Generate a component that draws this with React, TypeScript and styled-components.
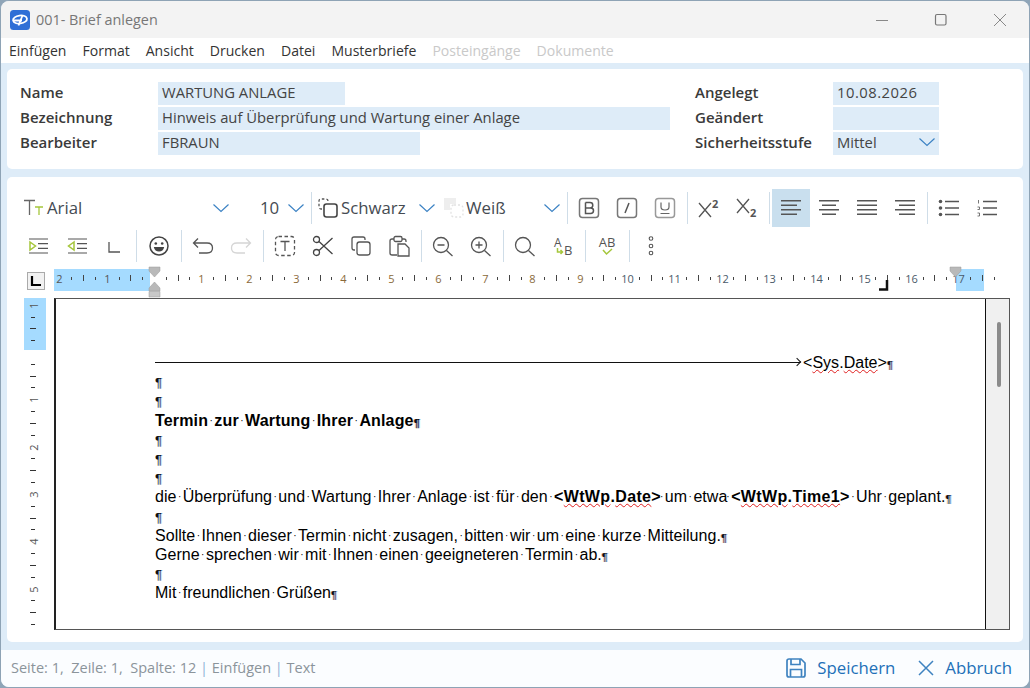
import React from "react";
import styled, { createGlobalStyle } from "styled-components";

const GlobalStyle = createGlobalStyle`
  html, body { margin: 0; padding: 0; background: #8fa5b8; }
  body { width: 1030px; height: 688px; overflow: hidden; font-family: "Open Sans", "Noto Sans", sans-serif; }
`;

const Window = styled.div`
  width: 1030px;
  height: 688px;
  box-sizing: border-box;
  border: 1px solid #8ea3b5;
  border-radius: 9px;
  overflow: hidden;
  background: #deecf8;
  display: flex;
  flex-direction: column;
`;

const TitleBar = styled.div`
  height: 37px;
  flex: none;
  background: #f3f3f3;
  display: flex;
  align-items: center;
  padding-left: 9px;
  color: #777;
  font-size: 14.4px;
`;

const TitleText = styled.span`
  margin-left: 6px;
  flex: 1;
`;

const WinButton = styled.div`
  width: 59px;
  height: 37px;
  display: flex;
  align-items: center;
  justify-content: center;
`;

const MenuBar = styled.div`
  height: 25px;
  flex: none;
  background: #fff;
  display: flex;
  align-items: center;
  gap: 16px;
  padding-left: 8px;
  font-size: 14.05px;
  color: #333;
`;

const MenuItem = styled.span<{ $off?: boolean }>`
  color: ${(p) => (p.$off ? "#c9c9c9" : "#333")};
`;

const Card = styled.div`
  background: #fff;
  border-radius: 5px;
  margin: 0 6px;
`;

const HeaderCard = styled(Card)`
  height: 100px;
  margin-top: 6px;
  box-sizing: border-box;
  padding: 13px 13px;
  display: grid;
  grid-template-columns: 138px 537px 138px 1fr;
  grid-auto-rows: 23px;
  row-gap: 2px;
  align-items: center;
`;

const Label = styled.div`
  font-size: 15px;
  font-weight: 600;
  color: #3a3a3a;
  padding-bottom: 4px;
`;

const Field = styled.div<{ $w: number; $tracking?: number }>`
  width: ${(p) => p.$w}px;
  height: 23px;
  background: #deecf8;
  font-size: 14.8px;
  letter-spacing: ${(p) => p.$tracking ?? 0}px;
  color: #444;
  padding: 0 3px 3px 4px;
  box-sizing: border-box;
  display: flex;
  align-items: center;
  justify-content: space-between;
`;

const EditorCard = styled(Card)`
  height: 465px;
  margin-top: 8px;
  box-sizing: border-box;
  padding: 12px 0 0 12px;
  display: flex;
  flex-direction: column;
`;

const ToolRow = styled.div`
  display: flex;
  height: 38px;
  align-items: center;
  flex: none;
`;

const ToolBtn = styled.div<{ $on?: boolean }>`
  width: 38px;
  height: 38px;
  flex: none;
  display: flex;
  align-items: center;
  justify-content: center;
  background: ${(p) => (p.$on ? "#c9dfee" : "transparent")};
`;

const Sep = styled.div<{ $w?: number }>`
  width: ${(p) => p.$w ?? 6}px;
  height: 32px;
  flex: none;
  display: flex;
  justify-content: center;
  &::before {
    content: "";
    width: 1px;
    background: #cfdde8;
  }
`;

const Combo = styled.div<{ $w: number; $pl: number; $pr: number }>`
  width: ${(p) => p.$w}px;
  height: 38px;
  flex: none;
  display: flex;
  align-items: center;
  font-size: 16.8px;
  color: #454b52;
  box-sizing: border-box;
  padding: 0 ${(p) => p.$pr}px 0 ${(p) => p.$pl}px;
`;

const ComboText = styled.span<{ $ml?: number }>`
  flex: 1;
  margin-left: ${(p) => p.$ml ?? 1}px;
  padding-bottom: 2px;
`;

const RulerRow = styled.div`
  height: 33px;
  flex: none;
  display: flex;
  align-items: flex-start;
  margin-left: 8px;
`;

const TabBox = styled.div`
  width: 18px;
  height: 18px;
  flex: none;
  box-sizing: border-box;
  border: 1px solid #aaa;
  background: #f2f2f2;
  margin: 7px 9px 0 0;
  display: flex;
  align-items: center;
  justify-content: center;
`;

const WorkArea = styled.div`
  display: flex;
  flex: none;
  height: 332px;
  margin-left: 5px;
`;

const SideRuler = styled.div`
  width: 30px;
  flex: none;
`;

const DocFrame = styled.div`
  width: 956px;
  height: 332px;
  box-sizing: border-box;
  border: 1px solid #555;
  border-left: 2px solid #222;
  display: flex;
`;

const Page = styled.div`
  flex: 1;
  border-right: 1px solid #111;
  padding: 54px 0 0 99px;
  font-family: "Liberation Sans", Arial, sans-serif;
  font-size: 16px;
  letter-spacing: 0.03px;
  color: #000;
  overflow: hidden;
`;

const Scrollbar = styled.div`
  width: 23px;
  flex: none;
  background: #f0f0f0;
  position: relative;
`;

const Thumb = styled.div`
  position: absolute;
  left: 11px;
  top: 23px;
  width: 4px;
  height: 65px;
  border-radius: 2px;
  background: #8b8b8b;
`;

/* $step is the distance to the next line: the document's lines are not evenly spaced */
const DocLine = styled.div<{ $step: number; $bold?: boolean }>`
  height: ${(p) => p.$step}px;
  line-height: 20px;
  white-space: nowrap;
  font-weight: ${(p) => (p.$bold ? 700 : 400)};
  letter-spacing: ${(p) => (p.$bold ? "0.15px" : "inherit")};
  display: flex;
  align-items: flex-start;
`;

const Strong = styled.span`
  font-weight: 700;
  letter-spacing: 0.35px;
`;

const Pilcrow = styled.span`
  font-size: 13px;
  color: #111;
  margin-top: -1px;
  text-shadow: 1px 0 0 rgba(70, 140, 225, 0.4);
`;

const EndMark = styled(Pilcrow)`
  font-size: 11px;
  margin-top: 0;
  padding-top: 2px;
  text-shadow: 1px 0 0 rgba(70, 140, 225, 0.5), -1px 0 0 rgba(200, 90, 30, 0.35);
`;

const Dot = styled.span`
  display: inline-block;
  width: 6.3px;
  text-align: center;
  font-size: 10px;
  font-weight: 400;
  letter-spacing: 0;
`;

const TightDot = styled(Dot)`
  margin-left: -2.5px;
`;

const Squiggle = styled.span`
  text-decoration: underline wavy #e02020;
  text-decoration-thickness: 1px;
  text-underline-offset: 1px;
`;

const TabArrow = styled.div`
  width: 645px;
  height: 1px;
  background: #111;
  position: relative;
  flex: none;
  margin: 9px 3px 0 0;
  &::after {
    content: "";
    position: absolute;
    right: 0;
    top: -3px;
    width: 6px;
    height: 6px;
    box-sizing: border-box;
    border-top: 1px solid #111;
    border-right: 1px solid #111;
    transform: rotate(45deg);
  }
`;

const StatusBar = styled.div`
  flex: 1;
  margin-top: 8px;
  background: #fbfdff;
  display: flex;
  align-items: center;
  padding: 0 17px 2px 10px;
  font-size: 14.5px;
  color: #8b949b;
`;

const StatusText = styled.span`
  flex: 1;
  white-space: pre;
`;

const Bar = styled.span`
  color: #8fb4d6;
`;

const ActionBtn = styled.div`
  display: flex;
  align-items: center;
  gap: 11px;
  font-size: 16.8px;
  color: #2270b8;
  margin-left: 23px;
`;

const Svg = styled.svg.attrs({ fill: "none" })`
  display: block;
  flex: none;
  overflow: visible;
`;

const SvgLabel = styled.text`
  font-family: "Open Sans", sans-serif;
`;

const S = "#555";
const G = "#a5c63b";

const Icon = ({ children, w = 22, h = 22, c = S, sw = 1.3 }: { children: React.ReactNode; w?: number; h?: number; c?: string; sw?: number }) => (
  <Svg width={w} height={h} viewBox={`0 0 ${w} ${h}`} stroke={c} strokeWidth={sw}>
    {children}
  </Svg>
);

const Chevron = () => (
  <Icon w={18} h={10} c="#3d83c4" sw={1.2}>
    <path d="M1.5 1.5 L9 8.5 L16.5 1.5" />
  </Icon>
);

const Lines = ({ rows }: { rows: [number, number][] }) => (
  <Icon sw={1.4}>
    {rows.map(([a, b], i) => (
      <path key={i} d={`M${a} ${3.8 + i * 4.5} H${b}`} />
    ))}
  </Icon>
);

const Boxed = ({ children, c = "#777" }: { children: React.ReactNode; c?: string }) => (
  <Icon c={c} sw={1.5}>
    <rect x="1.5" y="1.5" width="19" height="19" rx="3" />
    {children}
  </Icon>
);

const Logo = () => (
  <Svg width="20" height="20" viewBox="0 0 20 20">
    <rect width="20" height="20" rx="3.5" fill="#2f6fd6" />
    <ellipse cx="10" cy="9.5" rx="7" ry="4" stroke="#fff" strokeWidth="1.8" transform="rotate(-8 10 9.5)" />
    <path d="M4 10.5 H12 M12.5 5.5 L8.5 15.5" stroke="#fff" strokeWidth="1.8" />
  </Svg>
);

const hTicks = () => {
  const items: React.ReactNode[] = [];
  const origin = 100;
  const cm = 47.3;
  for (let q = -8; q <= 71; q++) {
    const x = Math.round(origin + (q * cm) / 4) + 0.5;
    if (q % 4 === 0) {
      const n = Math.abs(q / 4);
      if (n === 0) continue;
      items.push(
        <SvgLabel key={q} x={x} y={18} fontSize="11" fill={q < 0 ? "#555" : n > 9 ? "#4a5a6a" : "#8a6a3a"} stroke="none" textAnchor="middle">
          {n}
        </SvgLabel>
      );
    } else {
      const half = q % 2 === 0;
      items.push(<path key={q} d={`M${x} ${half ? 10 : 12} V${half ? 16 : 15}`} stroke="#444" />);
    }
  }
  return items;
};

const Ruler = () => (
  <Svg width="958" height="33" viewBox="0 0 958 33">
    <rect x="0" y="4" width="96" height="22" fill="#a5dbff" />
    <rect x="902" y="4" width="28" height="22" fill="#a5dbff" />
    {hTicks()}
    <path d="M95 2 H106 V6 L100.5 12 L95 6 Z" fill="#b9b9b9" stroke="#999" strokeWidth="0.5" />
    <path d="M100.5 17 L106 23 V26 H95 V23 Z" fill="#b9b9b9" stroke="#999" strokeWidth="0.5" />
    <path d="M95 26.5 H106 V32 H95 Z" fill="#c8c8c8" stroke="#999" strokeWidth="0.5" />
    <path d="M896 2 H907 V6 L901.5 12 L896 6 Z" fill="#b9b9b9" stroke="#999" strokeWidth="0.5" />
    <path d="M833 15 V24.5 H825" stroke="#111" strokeWidth="2.5" />
  </Svg>
);

const vTicks = () => {
  const items: React.ReactNode[] = [];
  const zero = 54;
  const cm = 47.3;
  for (let q = -4; q <= 23; q++) {
    const y = Math.round(zero + (q * cm) / 4) + 0.5;
    if (q === 0) continue;
    if (q % 4 === 0) {
      const n = Math.abs(q / 4);
      items.push(
        <SvgLabel key={q} x={0} y={0} fontSize="11" fill="#555" stroke="none" textAnchor="middle" transform={`translate(14 ${y}) rotate(-90)`}>
          {n}
        </SvgLabel>
      );
    } else {
      const half = q % 2 === 0;
      items.push(<path key={q} d={`M${half ? 6 : 7} ${y} H${half ? 12 : 11}`} stroke="#333" />);
    }
  }
  return items;
};

const SideRulerArt = () => (
  <Svg width="22" height="331" viewBox="0 0 22 331">
    <rect x="0" y="0" width="22" height="52" fill="#a5dbff" />
    {vTicks()}
  </Svg>
);

const Spaced = ({ text }: { text: string }) => {
  const parts = text.split(" ");
  return (
    <>
      {parts.map((w, i) => (
        <React.Fragment key={i}>
          <span>{w}</span>
          {i < parts.length - 1 && <Dot>·</Dot>}
        </React.Fragment>
      ))}
    </>
  );
};

const Empty = ({ step }: { step: number }) => (
  <DocLine $step={step}>
    <Pilcrow>¶</Pilcrow>
  </DocLine>
);

export default function App() {
  return (
    <Window>
      <GlobalStyle />
      <TitleBar>
        <Logo />
        <TitleText>001- Brief anlegen</TitleText>
        <WinButton>
          <Icon w={14} h={14} c="#888" sw={1}>
            <path d="M1 7.5 H13" />
          </Icon>
        </WinButton>
        <WinButton>
          <Icon w={14} h={14} c="#777" sw={1.2}>
            <rect x="1.5" y="1.5" width="10.5" height="10.5" rx="1.5" />
          </Icon>
        </WinButton>
        <WinButton>
          <Icon w={14} h={14} c="#888" sw={1}>
            <path d="M1 1 L13 13 M13 1 L1 13" />
          </Icon>
        </WinButton>
      </TitleBar>
      <MenuBar>
        {["Einfügen", "Format", "Ansicht", "Drucken", "Datei", "Musterbriefe"].map((m) => (
          <MenuItem key={m}>{m}</MenuItem>
        ))}
        <MenuItem $off>Posteingänge</MenuItem>
        <MenuItem $off>Dokumente</MenuItem>
      </MenuBar>
      <HeaderCard>
        <Label>Name</Label>
        <Field $w={187}>WARTUNG ANLAGE</Field>
        <Label>Angelegt</Label>
        <Field $w={106} $tracking={0.5}>10.08.2026</Field>
        <Label>Bezeichnung</Label>
        <Field $w={512}>Hinweis auf Überprüfung und Wartung einer Anlage</Field>
        <Label>Geändert</Label>
        <Field $w={106} />
        <Label>Bearbeiter</Label>
        <Field $w={262}>FBRAUN</Field>
        <Label>Sicherheitsstufe</Label>
        <Field $w={106}>
          Mittel
          <Chevron />
        </Field>
      </HeaderCard>
      <EditorCard>
        <ToolRow>
          <Combo $w={213} $pl={5} $pr={2}>
            <Icon w={22} h={22}>
              <path d="M0 3.5 H11 M5.5 3.5 V18" stroke="#666" />
              <path d="M11 10 H19 M15 10 V18" stroke={G} />
            </Icon>
            <ComboText>Arial</ComboText>
            <Chevron />
          </Combo>
          <Combo $w={76} $pl={0} $pr={3}>
            <ComboText $ml={28}>10</ComboText>
            <Chevron />
          </Combo>
          <Sep />
          <Combo $w={124} $pl={3} $pr={2}>
            <Icon w={22} h={22}>
              <path d="M5 12 H4 Q2 12 2 10 V4 Q2 2 4 2 H9 Q11 2 11 4 V6" strokeDasharray="2.5 2" />
              <rect x="7" y="7" width="13" height="13" rx="2.5" stroke="#444" strokeWidth="1.6" />
            </Icon>
            <ComboText $ml={2}>Schwarz</ComboText>
            <Chevron />
          </Combo>
          <Combo $w={126} $pl={5} $pr={3}>
            <Icon w={22} h={22}>
              <path d="M1 1 H13 V7 H7 V13 H1 Z" fill="#eee" stroke="none" />
              <rect x="8" y="8" width="12" height="12" rx="3" stroke="#e2e2e2" strokeDasharray="2 2" />
            </Icon>
            <ComboText $ml={1}>Weiß</ComboText>
            <Chevron />
          </Combo>
          <Sep />
          <ToolBtn>
            <Boxed>
              <path d="M7.5 5.5 V16.5 H12.5 Q15.5 16.5 15.5 13.5 Q15.5 11 12.5 11 H7.5 M12 11 Q14.8 11 14.8 8.2 Q14.8 5.5 12 5.5 H7.5" stroke="#555" />
            </Boxed>
          </ToolBtn>
          <ToolBtn>
            <Boxed>
              <path d="M13 6 L9 16" stroke="#555" />
            </Boxed>
          </ToolBtn>
          <ToolBtn>
            <Boxed c="#999">
              <path d="M7 5.5 V10 Q7 13 11 13 Q15 13 15 10 V5.5 M6.5 16.5 H15.5" stroke="#666" strokeWidth="1.2" />
            </Boxed>
          </ToolBtn>
          <Sep />
          <ToolBtn>
            <Icon>
              <path d="M1 6 L13 20 M13 6 L1 20" />
              <SvgLabel x="14" y="11" fontSize="11" fontWeight="700" fill="#555" stroke="none">2</SvgLabel>
            </Icon>
          </ToolBtn>
          <ToolBtn>
            <Icon>
              <path d="M1 2 L13 16 M13 2 L1 16" />
              <SvgLabel x="14" y="20" fontSize="11" fontWeight="700" fill="#555" stroke="none">2</SvgLabel>
            </Icon>
          </ToolBtn>
          <Sep />
          <ToolBtn $on>
            <Lines rows={[[1, 21], [1, 17], [1, 21], [1, 17]]} />
          </ToolBtn>
          <ToolBtn>
            <Lines rows={[[1, 21], [4, 18], [1, 21], [4, 18]]} />
          </ToolBtn>
          <ToolBtn>
            <Lines rows={[[1, 21], [1, 21], [1, 21], [1, 21]]} />
          </ToolBtn>
          <ToolBtn>
            <Lines rows={[[1, 21], [5, 21], [1, 21], [5, 21]]} />
          </ToolBtn>
          <Sep />
          <ToolBtn>
            <Icon sw={1.4}>
              <path d="M7 4.5 H21 M7 11 H21 M7 17.5 H21" />
              <circle cx="2.5" cy="4.5" r="1.8" fill="#555" stroke="none" />
              <circle cx="2.5" cy="11" r="1.8" fill="#555" stroke="none" />
              <circle cx="2.5" cy="17.5" r="1.8" fill="#555" stroke="none" />
            </Icon>
          </ToolBtn>
          <ToolBtn>
            <Icon sw={1.4}>
              <path d="M7 4.5 H21 M7 11 H21 M7 17.5 H21" />
              <path d="M2.5 3 V6.5 M1.5 10 H3.5 V12.5 H1.5 M1.5 16 H3.5 V19 H1.5" strokeWidth="0.8" />
            </Icon>
          </ToolBtn>
        </ToolRow>
        <ToolRow>
          <ToolBtn>
            <Icon sw={1.2}>
              <path d="M3 7 L8.5 11 L3 15 Z" stroke={G} strokeWidth="1.5" />
              <path d="M2 4 H21 M11 8.7 H21 M11 13.3 H21 M2 18 H21" />
            </Icon>
          </ToolBtn>
          <ToolBtn>
            <Icon sw={1.2}>
              <path d="M9 7 L3.5 11 L9 15 Z" stroke={G} strokeWidth="1.5" />
              <path d="M3 4 H22 M12 8.7 H22 M12 13.3 H22 M3 18 H22" />
            </Icon>
          </ToolBtn>
          <ToolBtn>
            <Icon>
              <path d="M6 7 V17 H17" />
            </Icon>
          </ToolBtn>
          <Sep $w={7} />
          <ToolBtn>
            <Icon c="#444" sw={1.5}>
              <circle cx="11" cy="11" r="9" />
              <circle cx="7.8" cy="8.5" r="1.3" fill="#444" stroke="none" />
              <circle cx="14.2" cy="8.5" r="1.3" fill="#444" stroke="none" />
              <path d="M5.8 12 H16.2 Q15.2 16.5 11 16.5 Q6.8 16.5 5.8 12 Z" fill="#444" stroke="none" />
            </Icon>
          </ToolBtn>
          <Sep />
          <ToolBtn>
            <Icon>
              <path d="M6 3.5 L1.5 8 L6 12.5 M1.5 8 H15 Q20.5 8 20.5 13 Q20.5 18 15 18 H7" />
            </Icon>
          </ToolBtn>
          <ToolBtn>
            <Icon c="#d5d5d5">
              <path d="M16 3.5 L20.5 8 L16 12.5 M20.5 8 H7 Q1.5 8 1.5 13 Q1.5 18 7 18 H15" />
            </Icon>
          </ToolBtn>
          <Sep />
          <ToolBtn>
            <Icon>
              <rect x="1.5" y="1.5" width="19" height="19" rx="3" strokeDasharray="3.5 2.5" />
              <path d="M6.5 6.5 H15.5 M11 6.5 V16" />
            </Icon>
          </ToolBtn>
          <ToolBtn>
            <Icon c="#444">
              <circle cx="4.5" cy="4.5" r="3" />
              <circle cx="4.5" cy="17.5" r="3" />
              <path d="M7 6.5 L20.5 19 M7 15.5 L20.5 3" />
            </Icon>
          </ToolBtn>
          <ToolBtn>
            <Icon>
              <path d="M5 15 H4 Q2 15 2 13 V4 Q2 2 4 2 H13 Q15 2 15 4 V5" />
              <rect x="7" y="7" width="13" height="13" rx="2.5" />
            </Icon>
          </ToolBtn>
          <ToolBtn>
            <Icon>
              <path d="M6 4 H4 Q2 4 2 6 V18 Q2 20 4 20 H9" />
              <path d="M14 4 H16 Q18 4 18 6 V7" />
              <rect x="6" y="1.5" width="8" height="5" rx="1.5" />
              <path d="M10 9 H17 L21 13 V21 H10 Z" />
            </Icon>
          </ToolBtn>
          <Sep />
          <ToolBtn>
            <Icon>
              <circle cx="9" cy="10" r="7.5" />
              <path d="M14.5 15.5 L20.5 21 M5.5 10 H12.5" />
            </Icon>
          </ToolBtn>
          <ToolBtn>
            <Icon>
              <circle cx="9" cy="10" r="7.5" />
              <path d="M14.5 15.5 L20.5 21 M5.5 10 H12.5 M9 6.5 V13.5" />
            </Icon>
          </ToolBtn>
          <Sep />
          <ToolBtn>
            <Icon>
              <circle cx="9" cy="10" r="7.5" />
              <path d="M14.5 15.5 L20.5 21" />
            </Icon>
          </ToolBtn>
          <ToolBtn>
            <Icon w={24} h={24}>
              <SvgLabel x="3" y="12.5" fontSize="12" fill="#555" stroke="none">A</SvgLabel>
              <SvgLabel x="13" y="21" fontSize="13" fill="#555" stroke="none">B</SvgLabel>
              <path d="M6.5 14 V18 H11.5 M9.5 16 L11.5 18 L9.5 20" stroke={G} strokeWidth="1.5" />
            </Icon>
          </ToolBtn>
          <Sep />
          <ToolBtn>
            <Icon w={24} h={24}>
              <SvgLabel x="12" y="13" fontSize="13" fill="#555" stroke="none" textAnchor="middle">AB</SvgLabel>
              <path d="M8 16 L11.5 20 L17 15" stroke={G} strokeWidth="1.5" />
            </Icon>
          </ToolBtn>
          <Sep />
          <ToolBtn>
            <Icon w={8} h={22} sw={1.1}>
              <circle cx="4" cy="3.5" r="1.8" />
              <circle cx="4" cy="11" r="1.8" />
              <circle cx="4" cy="18" r="1.8" />
            </Icon>
          </ToolBtn>
        </ToolRow>
        <RulerRow>
          <TabBox>
            <Icon w={12} h={12} c="#000" sw={2.2}>
              <path d="M2 1 V10 H11" />
            </Icon>
          </TabBox>
          <Ruler />
        </RulerRow>
        <WorkArea>
          <SideRuler>
            <SideRulerArt />
          </SideRuler>
          <DocFrame>
            <Page>
              <DocLine $step={21}>
                <TabArrow />
                <span>&lt;</span>
                <Squiggle>Sys</Squiggle>
                <span>.</span>
                <Squiggle>Date</Squiggle>
                <span>&gt;</span>
                <EndMark>¶</EndMark>
              </DocLine>
              <Empty step={19} />
              <Empty step={18} />
              <DocLine $step={21} $bold>
                <Spaced text="Termin zur Wartung Ihrer Anlage" />
                <EndMark>¶</EndMark>
              </DocLine>
              <Empty step={19} />
              <Empty step={19} />
              <Empty step={17} />
              <DocLine $step={22}>
                <Spaced text="die Überprüfung und Wartung Ihrer Anlage ist für den" />
                <Dot>·</Dot>
                <Strong>&lt;</Strong>
                <Strong><Squiggle>WtWp</Squiggle></Strong>
                <Strong>.</Strong>
                <Strong><Squiggle>Date</Squiggle></Strong>
                <Strong>&gt;</Strong>
                <TightDot>·</TightDot>
                <Spaced text="um etwa" />
                <TightDot>·</TightDot>
                <Strong>&lt;</Strong>
                <Strong><Squiggle>WtWp</Squiggle></Strong>
                <Strong>.</Strong>
                <Strong><Squiggle>Time1</Squiggle></Strong>
                <Strong>&gt;</Strong>
                <Dot>·</Dot>
                <Spaced text="Uhr geplant." />
                <EndMark>¶</EndMark>
              </DocLine>
              <Empty step={17} />
              <DocLine $step={19}>
                <Spaced text="Sollte Ihnen dieser Termin nicht zusagen, bitten wir um eine kurze Mitteilung." />
                <EndMark>¶</EndMark>
              </DocLine>
              <DocLine $step={21}>
                <Spaced text="Gerne sprechen wir mit Ihnen einen geeigneteren Termin ab." />
                <EndMark>¶</EndMark>
              </DocLine>
              <Empty step={17} />
              <DocLine $step={20}>
                <Spaced text="Mit freundlichen Grüßen" />
                <EndMark>¶</EndMark>
              </DocLine>
            </Page>
            <Scrollbar>
              <Thumb />
            </Scrollbar>
          </DocFrame>
        </WorkArea>
      </EditorCard>
      <StatusBar>
        <StatusText>
          Seite: 1,  Zeile: 1,  Spalte: 12 <Bar>|</Bar> Einfügen <Bar>|</Bar> Text
        </StatusText>
        <ActionBtn>
          <Icon w={20} h={20} c="#3f83c0" sw={1.7}>
            <path d="M1 3 Q1 1 3 1 H15 L19 5 V17 Q19 19 17 19 H3 Q1 19 1 17 Z" />
            <path d="M5 1 V6.5 H14 V1 M4.5 19 V11.5 H15.5 V19" />
          </Icon>
          Speichern
        </ActionBtn>
        <ActionBtn>
          <Icon w={16} h={16} c="#3f83c0" sw={1.5}>
            <path d="M1 1 L15 15 M15 1 L1 15" />
          </Icon>
          Abbruch
        </ActionBtn>
      </StatusBar>
    </Window>
  );
}
